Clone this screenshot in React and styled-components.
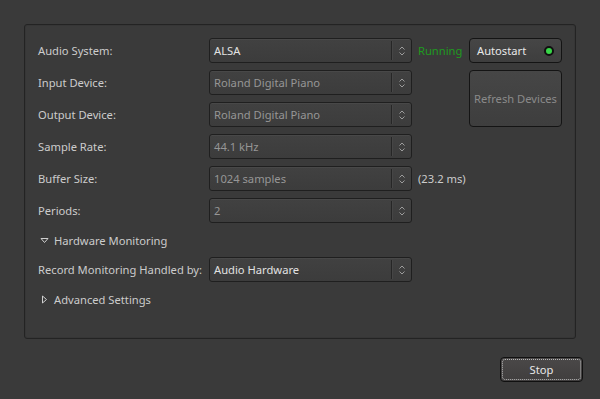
import React from 'react';
import styled, { createGlobalStyle } from 'styled-components';

const Global = createGlobalStyle`
  html, body {
    margin: 0;
    padding: 0;
    background: #3a3a3a;
  }
  body {
    font-family: "Noto Sans", "DejaVu Sans", sans-serif;
    font-size: 11.2px;
    color: #d4d4d4;
  }
`;

const Window = styled.div`
  width: 600px;
  height: 399px;
  box-sizing: border-box;
  padding: 24px 17px 0 24px;
  display: flex;
  flex-direction: column;
  align-items: stretch;
`;

const Panel = styled.div`
  width: 552px;
  height: 315px;
  box-sizing: border-box;
  border: 1px solid #232323;
  border-radius: 3px;
  box-shadow: inset 0 0 0 1px #363636;
  padding: 13px 0 0 13px;
`;

const Form = styled.div`
  display: grid;
  grid-template-columns: 171px 203px 57px 93px;
  grid-template-rows: repeat(6, 25px) 20px 25px 20px;
  row-gap: 7px;
  align-items: center;
`;

const Label = styled.div`
  color: #cccccc;
  white-space: nowrap;
`;

const Combo = styled.div`
  height: 25px;
  box-sizing: border-box;
  border: 1px solid #1f1f1f;
  border-radius: 3px;
  background: linear-gradient(#414141, #3c3c3c);
  box-shadow: inset 0 1px 0 rgba(255, 255, 255, 0.04);
  display: flex;
  align-items: center;
  color: ${(p) => (p.$dim ? '#969696' : '#e2e2e2')};
`;

const ComboText = styled.span`
  flex: 1;
  padding-left: 4px;
  white-space: nowrap;
`;

const ComboSep = styled.span`
  width: 1px;
  height: 19px;
  background: #262626;
  box-shadow: 1px 0 0 #464646;
`;

const ComboArrow = styled.span`
  width: 19px;
  display: flex;
  justify-content: center;
  align-items: center;
`;

const Extra = styled.div`
  padding-left: 6px;
  white-space: nowrap;
  color: ${(p) => p.$color || '#cccccc'};
`;

const Button = styled.div`
  box-sizing: border-box;
  border: 1px solid #141414;
  border-radius: 4px;
  background: linear-gradient(#464646, #3e3e3e);
  display: flex;
  align-items: center;
  color: ${(p) => (p.$dim ? '#8a8a8a' : '#e8e8e8')};
  justify-content: ${(p) => (p.$left ? 'space-between' : 'center')};
  padding: ${(p) => (p.$left ? '0 7px 0 7px' : '0')};
  grid-row: ${(p) => p.$rows || 'auto'};
  grid-column: 4;
  align-self: stretch;
`;

const Led = styled.span`
  width: 6px;
  height: 6px;
  border-radius: 50%;
  background: #38d648;
  border: 2px solid #101010;
`;

const Expander = styled.div`
  grid-column: 1 / -1;
  height: 20px;
  display: flex;
  align-items: center;
  gap: 5px;
  padding-left: 2px;
  color: #cccccc;
`;

const Footer = styled.div`
  display: flex;
  justify-content: flex-end;
  padding-top: 18px;
`;

const StopButton = styled.div`
  width: 83px;
  height: 25px;
  box-sizing: border-box;
  border: 1px solid #101010;
  border-radius: 4px;
  background: linear-gradient(#4a4848, #403e3e);
  padding: 1px;
  color: #e8e8e8;
  & > span {
    display: flex;
    width: 100%;
    height: 100%;
    box-sizing: border-box;
    border: 1px dotted #b8b8b8;
    border-radius: 3px;
    align-items: center;
    justify-content: center;
  }
`;

const Updown = () => (
  <svg width="8" height="12" viewBox="0 0 8 12" fill="none" stroke="#9c9c9c" strokeWidth="1">
    <path d="M1.5 4.5 L4 2 L6.5 4.5" />
    <path d="M1.5 7.5 L4 10 L6.5 7.5" />
  </svg>
);

const Tri = ({ open }) => (
  <svg width="9" height="9" viewBox="0 0 9 9" fill="none" stroke="#cfcfcf" strokeWidth="1">
    {open ? <path d="M1 2.5 H8 L4.5 6.5 Z" /> : <path d="M2.5 1 V8 L6.5 4.5 Z" />}
  </svg>
);

const Select = ({ value, dim }) => (
  <Combo $dim={dim}>
    <ComboText>{value}</ComboText>
    <ComboSep />
    <ComboArrow>
      <Updown />
    </ComboArrow>
  </Combo>
);

const App = () => {
  return (
    <>
      <Global />
      <Window>
        <Panel>
          <Form>
            <Label>Audio System:</Label>
            <Select value="ALSA" />
            <Extra $color="#1f9a1f">Running</Extra>
            <Button $left>
              <span>Autostart</span>
              <Led />
            </Button>

            <Label>Input Device:</Label>
            <Select value="Roland Digital Piano" dim />
            <div />
            <Button $dim $rows="2 / span 2">Refresh Devices</Button>

            <Label>Output Device:</Label>
            <Select value="Roland Digital Piano" dim />
            <div />

            <Label>Sample Rate:</Label>
            <Select value="44.1 kHz" dim />
            <div />
            <div />

            <Label>Buffer Size:</Label>
            <Select value="1024 samples" dim />
            <Extra>(23.2 ms)</Extra>
            <div />

            <Label>Periods:</Label>
            <Select value="2" dim />
            <div />
            <div />

            <Expander>
              <Tri open />
              <span>Hardware Monitoring</span>
            </Expander>

            <Label>Record Monitoring Handled by:</Label>
            <Select value="Audio Hardware" />
            <div />
            <div />

            <Expander>
              <Tri />
              <span>Advanced Settings</span>
            </Expander>
          </Form>
        </Panel>
        <Footer>
          <StopButton>
            <span>Stop</span>
          </StopButton>
        </Footer>
      </Window>
    </>
  );
};

export default App;
